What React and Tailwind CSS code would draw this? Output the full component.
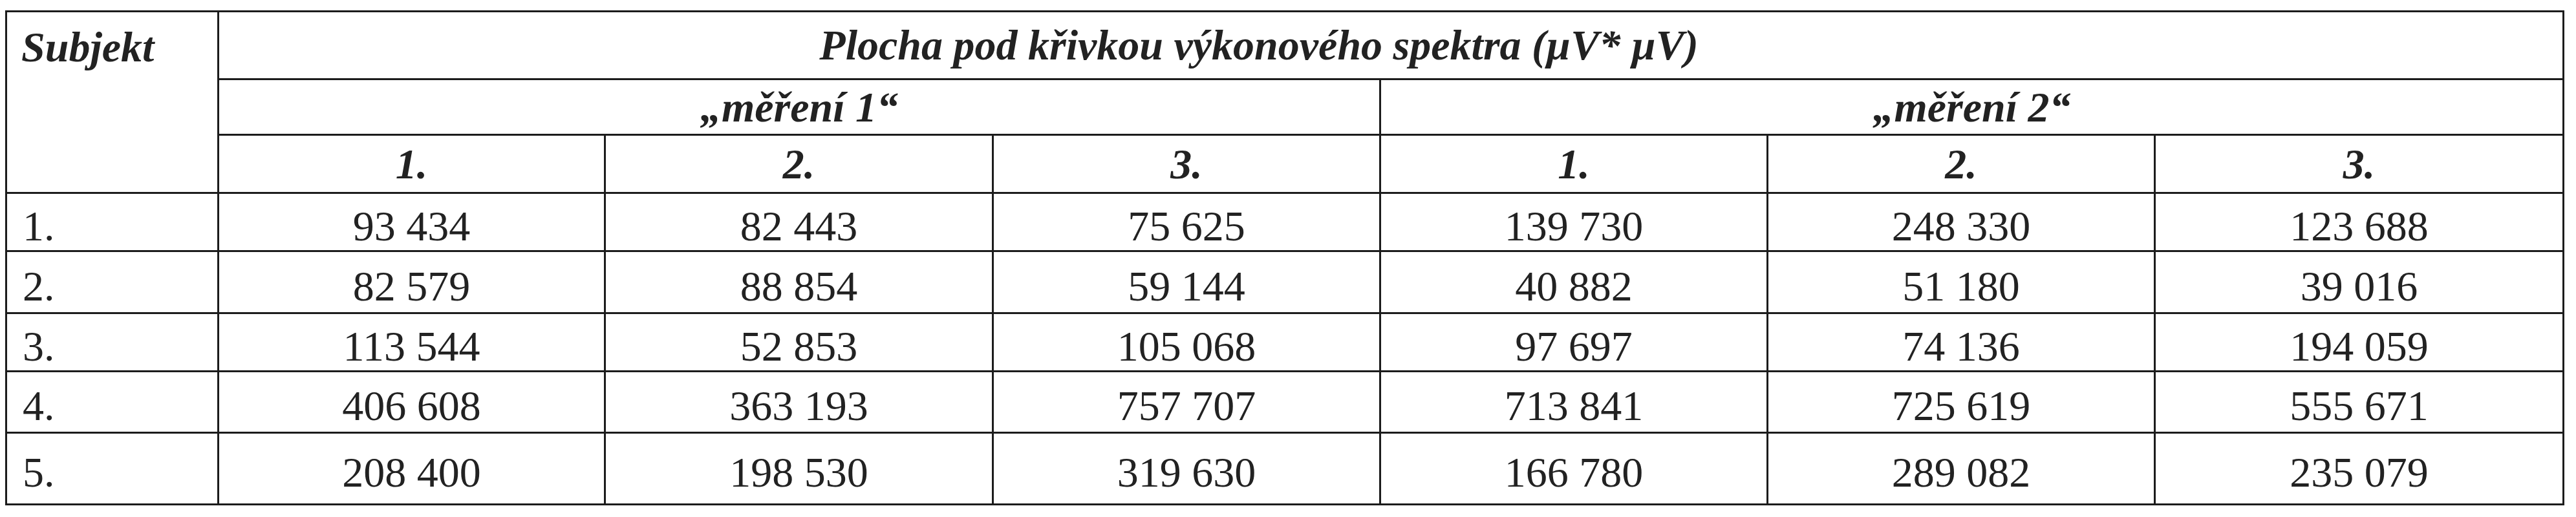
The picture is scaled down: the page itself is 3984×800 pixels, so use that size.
const rows = [
  { s: "1.", v: ["93 434", "82 443", "75 625", "139 730", "248 330", "123 688"], h: "h-[90px]" },
  { s: "2.", v: ["82 579", "88 854", "59 144", "40 882", "51 180", "39 016"], h: "h-[96px]" },
  { s: "3.", v: ["113 544", "52 853", "105 068", "97 697", "74 136", "194 059"], h: "h-[90px]" },
  { s: "4.", v: ["406 608", "363 193", "757 707", "713 841", "725 619", "555 671"], h: "h-[95px]" },
  { s: "5.", v: ["208 400", "198 530", "319 630", "166 780", "289 082", "235 079"], h: "h-[111px]" },
];

const cell = "border-[3px] border-[#1c1c1c] p-0";

const App = () => {
  return (
    <div className="w-[3984px] h-[800px] bg-white pt-[16px] pl-[8px] font-['Liberation_Serif',serif] text-[66px] text-[#222]">
      <table className="border-collapse table-fixed w-[3955px]">
        <colgroup>
          <col className="w-[328px]" />
          <col className="w-[598px]" />
          <col className="w-[600px]" />
          <col className="w-[599px]" />
          <col className="w-[599px]" />
          <col className="w-[599px]" />
          <col className="w-[632px]" />
        </colgroup>
        <thead>
          <tr className="h-[105px]">
            <th rowSpan={3} className={`${cell} align-top text-left`}>
              <div className="h-[102px] flex items-center pl-[22px] pt-[6px] italic font-bold leading-none">
                Subjekt
              </div>
            </th>
            {/* title sits a bit left of the span centre in the source */}
            <th colSpan={6} className={`${cell} pr-[408px] italic font-bold leading-none text-center`}>
              Plocha pod křivkou výkonového spektra (µV* µV)
            </th>
          </tr>
          <tr className="h-[86px]">
            <th colSpan={3} className={`${cell} italic font-bold leading-none text-center`}>
              „měření 1“
            </th>
            <th colSpan={3} className={`${cell} italic font-bold leading-none text-center`}>
              „měření 2“
            </th>
          </tr>
          <tr className="h-[90px]">
            {["1.", "2.", "3.", "1.", "2.", "3."].map((t, i) => (
              <th key={i} className={`${cell} italic font-bold leading-none text-center`}>
                {t}
              </th>
            ))}
          </tr>
        </thead>
        <tbody>
          {rows.map((r) => (
            <tr key={r.s} className={r.h}>
              <td className={`${cell} text-left pl-[24px] pt-[12px] leading-none`}>{r.s}</td>
              {r.v.map((v, i) => (
                <td key={i} className={`${cell} text-center pt-[12px] leading-none`}>
                  {v}
                </td>
              ))}
            </tr>
          ))}
        </tbody>
      </table>
    </div>
  );
};

export default App;
